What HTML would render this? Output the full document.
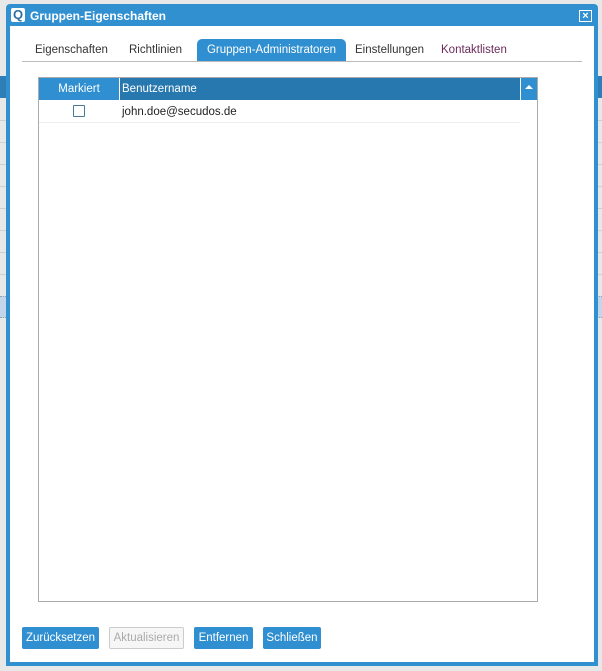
<!DOCTYPE html>
<html><head><style>
*{margin:0;padding:0;box-sizing:border-box}
body{width:602px;height:671px;background:#e8e8e8;position:relative;overflow:hidden;font-family:"Liberation Sans","DejaVu Sans",sans-serif;font-size:11.5px}
.bg{position:absolute;left:0;width:602px}
.dlg{position:absolute;left:6px;top:4px;width:592px;height:662px;background:#3090d0;border-radius:4px 4px 0 0}
.inner{position:absolute;left:10px;top:26px;width:584px;height:636px;background:#fff}
.title{position:absolute;left:24px;top:5px;color:#fff;font-weight:bold;font-size:12px}
.tab{position:absolute;top:39px;height:23px;line-height:22px;color:#333;font-size:11.5px}
.btn{position:absolute;top:627px;height:22px;line-height:22px;border-radius:2px;background:#2f8fd0;color:#fff;font-size:11.5px;text-align:center}
</style></head><body>
<div class="bg" style="top:76px;height:22px;background:#2e7fb8"></div>
<div class="bg" style="top:120px;height:1px;background:#d0d0d0"></div>
<div class="bg" style="top:142px;height:1px;background:#d0d0d0"></div>
<div class="bg" style="top:164px;height:1px;background:#d0d0d0"></div>
<div class="bg" style="top:186px;height:1px;background:#d0d0d0"></div>
<div class="bg" style="top:208px;height:1px;background:#d0d0d0"></div>
<div class="bg" style="top:230px;height:1px;background:#d0d0d0"></div>
<div class="bg" style="top:252px;height:1px;background:#d0d0d0"></div>
<div class="bg" style="top:274px;height:1px;background:#d0d0d0"></div>
<div class="bg" style="top:296px;height:22px;background:#c3d5ea;border-top:1px dotted #8aa;border-bottom:1px dotted #8aa"></div>
<div class="dlg">
 <div style="position:absolute;left:5px;top:4px;width:14px;height:14px;background:#fff;border-radius:2px;color:#2f6f9f;font-weight:bold;font-size:13px;line-height:14px;text-align:center">Q</div>
 <div class="title">Gruppen-Eigenschaften</div>
 <div style="position:absolute;left:573px;top:6px;width:13px;height:12px;border:1px solid #fff;color:#fff;font-size:11px;line-height:10px;text-align:center;font-weight:bold">×</div>
</div>
<div class="inner"></div>
<div class="tab" style="left:35px">Eigenschaften</div>
<div class="tab" style="left:129px">Richtlinien</div>
<div class="tab" style="left:197px;width:149px;background:#2f8fd0;color:#fff;border-radius:5px 5px 0 0;text-align:center">Gruppen-Administratoren</div>
<div class="tab" style="left:355px">Einstellungen</div>
<div class="tab" style="left:441px;color:#6a2a5a">Kontaktlisten</div>
<div style="position:absolute;left:22px;top:61px;width:560px;height:1px;background:#bbb"></div>
<div style="position:absolute;left:38px;top:77px;width:500px;height:525px;border:1px solid #aaa">
 <div style="position:absolute;left:0;top:0;width:80px;height:22px;background:#2f8fd0;color:#fff;line-height:22px;text-align:center">Markiert</div>
 <div style="position:absolute;left:80px;top:0;width:1px;height:22px;background:#fff"></div>
 <div style="position:absolute;left:81px;top:0;width:400px;height:22px;background:#2878b0;color:#fff;line-height:22px;padding-left:2px">Benutzername</div>
 <div style="position:absolute;left:481px;top:0;width:1px;height:22px;background:#fff"></div>
 <div style="position:absolute;left:482px;top:0;width:16px;height:22px;background:#2f8fd0"><div style="position:absolute;left:4px;top:7px;border-left:4px solid transparent;border-right:4px solid transparent;border-bottom:4px solid #fff"></div></div>
 <div style="position:absolute;left:34px;top:27px;width:12px;height:12px;border:1px solid #4a7a9a;border-radius:1px"></div>
 <div style="position:absolute;left:83px;top:28px;color:#222">john.doe@secudos.de</div>
 <div style="position:absolute;left:0;top:44px;width:481px;height:1px;background:#eee"></div>
</div>
<div class="btn" style="left:22px;width:77px">Zurücksetzen</div>
<div class="btn" style="left:109px;width:75px;background:#f6f6f6;border:1px solid #ccc;color:#aaa;line-height:20px">Aktualisieren</div>
<div class="btn" style="left:194px;width:59px">Entfernen</div>
<div class="btn" style="left:263px;width:58px">Schließen</div>
</body></html>
